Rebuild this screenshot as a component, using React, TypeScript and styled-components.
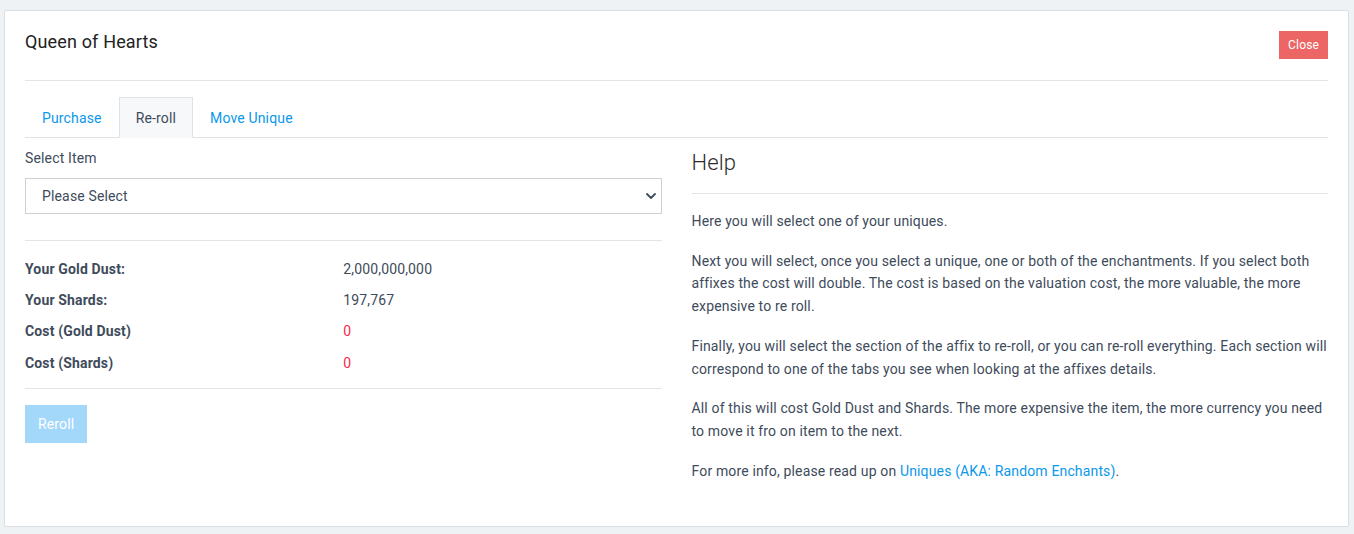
import React, { useState } from "react";
import styled, { createGlobalStyle } from "styled-components";

const GlobalStyle = createGlobalStyle`
  html, body {
    margin: 0;
    padding: 0;
    background: #eef2f5;
  }
  body {
    font-family: Roboto, "Liberation Sans", sans-serif;
    font-size: 14px;
    letter-spacing: 0.15px;
    color: #3e4b5b;
  }
  * {
    box-sizing: border-box;
  }
`;

const stats = [
  { label: "Your Gold Dust:", value: "2,000,000,000", cost: false },
  { label: "Your Shards:", value: "197,767", cost: false },
  { label: "Cost (Gold Dust)", value: "0", cost: true },
  { label: "Cost (Shards)", value: "0", cost: true },
];

const tabs = ["Purchase", "Re-roll", "Move Unique"];

export default function App() {
  const [active, setActive] = useState("Re-roll");

  return (
    <Page>
      <GlobalStyle />
      <Card>
        <Header>
          <Title>Queen of Hearts</Title>
          <CloseButton>Close</CloseButton>
        </Header>
        <Body>
          <TabList>
            {tabs.map((t) => (
              <Tab key={t} $active={t === active} onClick={() => setActive(t)}>
                {t}
              </Tab>
            ))}
          </TabList>
          <Columns>
            <LeftColumn>
              <Label>Select Item</Label>
              <SelectWrap>
                <Select defaultValue="">
                  <option value="">Please Select</option>
                </Select>
                <Chevron viewBox="0 0 10 6" width="10" height="6">
                  <path
                    d="M1 1l4 4 4-4"
                    fill="none"
                    stroke="#3e4b5b"
                    strokeWidth="1.8"
                    strokeLinecap="round"
                    strokeLinejoin="round"
                  />
                </Chevron>
              </SelectWrap>
              <Divider />
              <StatsGrid>
                {stats.map((s) => (
                  <React.Fragment key={s.label}>
                    <StatLabel>{s.label}</StatLabel>
                    <StatValue $cost={s.cost}>{s.value}</StatValue>
                  </React.Fragment>
                ))}
              </StatsGrid>
              <BottomDivider />
              <RerollButton disabled>Reroll</RerollButton>
            </LeftColumn>
            <RightColumn>
              <HelpTitle>Help</HelpTitle>
              <HelpDivider />
              <Paragraph>Here you will select one of your uniques.</Paragraph>
              <Paragraph>
                Next you will select, once you select a unique, one or both of
                the enchantments. If you select both affixes the cost will
                double. The cost is based on the valuation cost, the more
                valuable, the more expensive to re roll.
              </Paragraph>
              <Paragraph>
                Finally, you will select the section of the affix to re-roll, or
                you can re-roll everything. Each section will correspond to one
                of the tabs you see when looking at the affixes details.
              </Paragraph>
              <Paragraph>
                All of this will cost Gold Dust and Shards. The more expensive
                the item, the more currency you need to move it fro on item to
                the next.
              </Paragraph>
              <Paragraph>
                For more info, please read up on{" "}
                <Link href="#">Uniques (AKA: Random Enchants)</Link>.
              </Paragraph>
            </RightColumn>
          </Columns>
        </Body>
      </Card>
    </Page>
  );
}

const Page = styled.div`
  padding: 10px 5px 7px 4px;
`;

const Card = styled.div`
  background: #fff;
  border: 1px solid #dadfe4;
  border-radius: 2px;
  padding: 20px 20px 27px;
`;

const Header = styled.div`
  display: flex;
  justify-content: space-between;
  align-items: flex-start;
  padding-bottom: 21px;
  border-bottom: 1px solid #e2e5e8;
`;

const Title = styled.h3`
  margin: 0;
  font-size: 18px;
  font-weight: 400;
  line-height: 22px;
  color: #222;
`;

const CloseButton = styled.button`
  height: 28px;
  padding: 0 9px;
  border: none;
  border-radius: 0;
  background: #ec6666;
  color: #fff;
  font-family: Roboto, "Liberation Sans", sans-serif;
  font-size: 12px;
  letter-spacing: 0.15px;
  cursor: pointer;
`;

const Body = styled.div`
  padding-top: 16px;
`;

const TabList = styled.div`
  display: flex;
  border-bottom: 1px solid #dee2e6;
`;

const Tab = styled.button<{ $active: boolean }>`
  height: 41px;
  margin-bottom: -1px;
  padding: 0 16px;
  font-family: Roboto, "Liberation Sans", sans-serif;
  font-size: 14px;
  letter-spacing: 0.15px;
  background: ${(p) => (p.$active ? "#f7f8fa" : "transparent")};
  color: ${(p) => (p.$active ? "#3e4b5b" : "#0b98ea")};
  border: 1px solid ${(p) => (p.$active ? "#dee2e6" : "transparent")};
  border-bottom-color: ${(p) => (p.$active ? "#f7f8fa" : "transparent")};
  cursor: pointer;
`;

const Columns = styled.div`
  display: grid;
  grid-template-columns: 1fr 1fr;
  column-gap: 30px;
`;

const LeftColumn = styled.div`
  padding-top: 10px;
`;

const RightColumn = styled.div`
  padding-top: 12px;
`;

const Label = styled.div`
  line-height: 20px;
  margin-bottom: 10px;
`;

const SelectWrap = styled.div`
  position: relative;
`;

const Select = styled.select`
  width: 100%;
  height: 36px;
  padding: 0 16px;
  appearance: none;
  border: 1px solid #ccd1d6;
  border-radius: 0;
  background: #fff;
  color: #3e4b5b;
  font-family: Roboto, "Liberation Sans", sans-serif;
  font-size: 14px;
  letter-spacing: 0.15px;
  outline: none;
`;

const Chevron = styled.svg`
  position: absolute;
  right: 6px;
  top: 15px;
  pointer-events: none;
`;

const Divider = styled.hr`
  margin: 26px 0 12px;
  border: none;
  border-top: 1px solid #e2e5e8;
`;

const StatsGrid = styled.div`
  display: grid;
  grid-template-columns: 1fr 1fr;
  grid-auto-rows: 31.3px;
  align-items: center;
`;

const StatLabel = styled.div`
  font-weight: 700;
`;

const StatValue = styled.div<{ $cost: boolean }>`
  color: ${(p) => (p.$cost ? "#f52a4d" : "#3e4b5b")};
`;

const BottomDivider = styled.hr`
  margin: 10px 0 16px;
  border: none;
  border-top: 1px solid #e2e5e8;
`;

const RerollButton = styled.button`
  height: 38px;
  padding: 0 13px;
  border: none;
  border-radius: 0;
  background: #a4d8fb;
  color: #fff;
  font-family: Roboto, "Liberation Sans", sans-serif;
  font-size: 14px;
  letter-spacing: 0.15px;
`;

const HelpTitle = styled.h3`
  margin: 0;
  font-size: 22px;
  font-weight: 300;
  line-height: 26px;
  color: #2b2b2b;
`;

const HelpDivider = styled.hr`
  margin: 17px 0 16px;
  border: none;
  border-top: 1px solid #e2e5e8;
`;

const Paragraph = styled.p`
  margin: 0 0 16.8px;
  line-height: 22.8px;
`;

const Link = styled.a`
  color: #0b98ea;
  text-decoration: none;
`;
